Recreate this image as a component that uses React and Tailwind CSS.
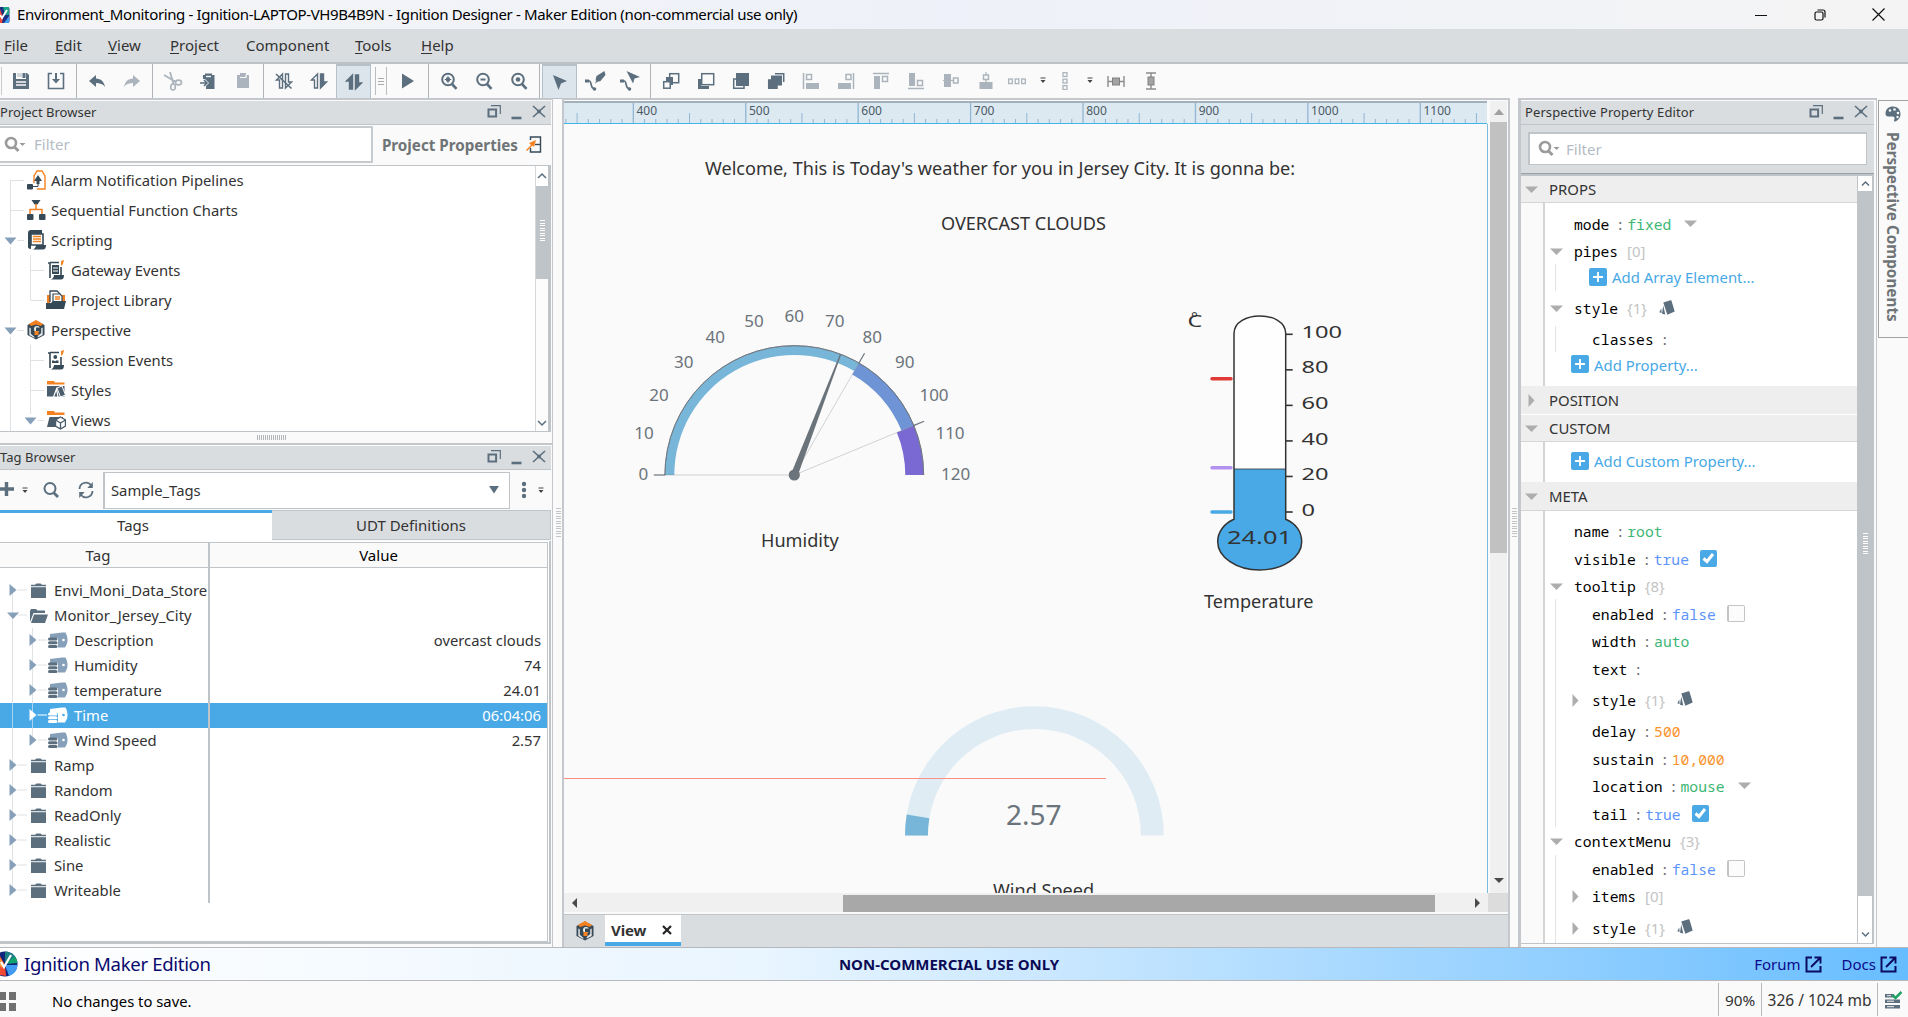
import React from "react";

const INK = "#5c6f7f";
const OFF = "#abb4bc";
const NAVY = "#364957";
const ORANGE = "#f58220";

function Svg({ w = 18, h = 18, vb, className = "", children }) {
  return (
    <svg width={w} height={h} viewBox={vb || `0 0 ${w} ${h}`} className={`block shrink-0 ${className}`} fill="none">
      {children}
    </svg>
  );
}

/* ---------- toolbar icons ---------- */
const Save = () => (
  <Svg>
    <path d="M1 1h3v6h10V1h1l2 2v14H1z" fill={INK} />
    <path d="M5 1h5v4H5z" fill={INK} opacity=".25" />
    <path d="M10.500 1h3v5h-3z" fill={INK} />
    <path d="M4 10h10M4 13h10" stroke="#fafafa" strokeWidth="1.500" />
  </Svg>
);
const Import = () => (
  <Svg>
    <path d="M5 1.500H1.500v15h15v-15H13" stroke={INK} strokeWidth="1.600" />
    <path d="M9 1v9" stroke={INK} strokeWidth="2" />
    <path d="M5 7l4 4.500 4-4.500z" fill={INK} />
  </Svg>
);
const Undo = ({ c = INK, flip }) => (
  <Svg>
    <g transform={flip ? "translate(18 0) scale(-1 1)" : undefined}>
      <path d="M1 9l7-6v3.500c5 .200 8 3 9 8.500-2-3-5-4-9-4v4z" fill={c} />
    </g>
  </Svg>
);
const Cut = () => (
  <Svg w={20} h={20}>
    <path d="M1 4l12 7M7 1l3.500 12" stroke={OFF} strokeWidth="1.800" />
    <ellipse cx="15.500" cy="11.500" rx="3" ry="2.400" stroke={OFF} strokeWidth="1.600" />
    <ellipse cx="10" cy="16" rx="2.300" ry="3" stroke={OFF} strokeWidth="1.600" />
  </Svg>
);
const PasteIn = () => (
  <Svg>
    <path d="M4 3h2V1.500h7V3h2.500v14H7v-3l3-3-4-4H4z" fill={INK} />
    <path d="M7 4.500h5" stroke="#fafafa" strokeWidth="1.400" />
    <path d="M1 11h6M5 8l3 3-3 3" stroke={INK} strokeWidth="1.600" />
  </Svg>
);
const Clip = () => (
  <Svg>
    <path d="M3 3h3V1h6v2h3v13H3z" fill={OFF} />
    <path d="M6 5.500h6V3" stroke="#fafafa" strokeWidth="1.200" />
  </Svg>
);
const Comms = ({ up, down, slash }) => (
  <Svg>
    <path d="M7.500 16H4.500V8H1.500l6-6z" fill={up ? INK : "none"} stroke={INK} strokeWidth="1.400" />
    <path d="M10.500 2h3v8h3l-6 6z" fill={down ? INK : "none"} stroke={INK} strokeWidth="1.400" />
    {slash && <path d="M1 2l15.500 14.500" stroke={INK} strokeWidth="1.600" />}
  </Svg>
);
const Play = () => (
  <Svg>
    <path d="M3 1.500v15L15 9z" fill={INK} />
  </Svg>
);
const Zoom = ({ k }) => (
  <Svg>
    <circle cx="8" cy="7.500" r="5.800" stroke={INK} strokeWidth="2" />
    <path d="M12 12l4.500 4.800" stroke={INK} strokeWidth="2.600" />
    {k === "out" ? <path d="M5.500 7.500h5" stroke={INK} strokeWidth="2" /> : <circle cx="8" cy="7.500" r="2.300" fill={INK} />}
    {k === "in" && <path d="M8 4.300v6.400M4.800 7.500h6.400" stroke={INK} strokeWidth="1.200" />}
  </Svg>
);
const Pointer = () => (
  <Svg>
    <path d="M2 2l14 6-6 2.500L7.500 17z" fill={INK} />
  </Svg>
);
const Pencil = () => (
  <Svg w={22} h={22}>
    <path d="M2 11h3.500c2 0 1 7.500 4.500 7.500" stroke={INK} strokeWidth="1.700" />
    <rect x="1" y="9.500" width="4" height="3" fill={INK} />
    <path d="M20.500 1l1 4-5.500 6.500-4.500-1 1-4.500z" fill={INK} />
    <path d="M13 9.500l-2 4 4-2.500z" fill={INK} />
    <circle cx="10.500" cy="19" r="1.800" fill={INK} />
  </Svg>
);
const PathArrow = () => (
  <Svg w={22} h={22}>
    <path d="M2 11h3.500c2 0 1 7.500 4.500 7.500" stroke={INK} strokeWidth="1.700" />
    <rect x="1" y="9.500" width="4" height="3" fill={INK} />
    <path d="M7.500 1l13.500 6-5.500 1.500L14 13.500z" fill={INK} />
    <circle cx="10.500" cy="19" r="1.800" fill={INK} />
  </Svg>
);
const Stack = ({ k }) => (
  <Svg>
    {k === 0 && (
      <>
        <rect x="7.700" y="1.700" width="9" height="9" stroke={INK} strokeWidth="1.500" />
        <path d="M4 5h7v8H4z" fill={INK} />
        <rect x="1.700" y="9.700" width="6.500" height="6.500" fill="#fafafa" stroke={INK} strokeWidth="1.500" />
      </>
    )}
    {k === 1 && (
      <>
        <path d="M1 7h3v7h8v3H1z" fill={INK} />
        <rect x="4.700" y="1.700" width="12" height="11" fill="#fafafa" stroke={INK} strokeWidth="1.500" />
      </>
    )}
    {k === 2 && (
      <>
        <path d="M4 7H1.700v9.300H12V14" stroke={INK} strokeWidth="1.500" />
        <rect x="4" y="1" width="13" height="13" fill={INK} />
      </>
    )}
    {k === 3 && (
      <>
        <path d="M8 1.700h8.700V10" stroke={INK} strokeWidth="1.500" />
        <rect x="4" y="3.500" width="11" height="10" fill={INK} />
        <path d="M4 8H1.700v8.300H10V13" stroke={INK} strokeWidth="1.500" fill={INK} />
      </>
    )}
  </Svg>
);
const Align = ({ k }) => (
  <Svg>
    {k === "l" && (<><path d="M1.500 1v16" stroke={OFF} strokeWidth="1.500" /><rect x="4.500" y="2.500" width="5" height="5" stroke={OFF} strokeWidth="1.500" /><path d="M4 11h13v6H4z" fill={OFF} /></>)}
    {k === "r" && (<><path d="M16.500 1v16" stroke={OFF} strokeWidth="1.500" /><rect x="9" y="2.500" width="5" height="5" stroke={OFF} strokeWidth="1.500" /><path d="M1 11h13v6H1z" fill={OFF} /></>)}
    {k === "t" && (<><path d="M1 1.500h16" stroke={OFF} strokeWidth="1.500" /><rect x="10.500" y="4.500" width="5" height="5" stroke={OFF} strokeWidth="1.500" /><path d="M2 4h6v13H2z" fill={OFF} /></>)}
    {k === "b" && (<><path d="M1 16.500h16" stroke={OFF} strokeWidth="1.500" /><rect x="10.500" y="8.500" width="5" height="5" stroke={OFF} strokeWidth="1.500" /><path d="M2 1h6v13H2z" fill={OFF} /></>)}
    {k === "m" && (<><path d="M1 8.500h16" stroke={OFF} strokeWidth="1.200" /><path d="M2 2h7v13H2z" fill={OFF} /><rect x="11.500" y="6" width="4.500" height="5" fill="#fafafa" stroke={OFF} strokeWidth="1.500" /></>)}
    {k === "c" && (<><path d="M9 0v17" stroke={OFF} strokeWidth="1.200" /><path d="M2.500 10h13v7h-13z" fill={OFF} /><rect x="6.500" y="3" width="5" height="4.500" fill="#fafafa" stroke={OFF} strokeWidth="1.500" /></>)}
    {k === "h" && [0, 6.500, 13].map((x) => <rect key={x} x={x + 0.7} y="7" width="3.600" height="4.600" stroke={OFF} strokeWidth="1.300" />)}
    {k === "v" && [0, 6.500, 13].map((y) => <rect key={y} y={y + 0.7} x="7" width="4" height="3.800" stroke={OFF} strokeWidth="1.300" />)}
    {k === "w" && (<><path d="M1 4v11M17 4v11M1 9.500h16" stroke="#8c8c8c" strokeWidth="1.400" /><rect x="5.500" y="6" width="7" height="7" fill="#a3a3a3" stroke="#808080" /></>)}
    {k === "e" && (<><path d="M4 1h10M4 17h10M9 1v16" stroke="#8c8c8c" strokeWidth="1.400" /><rect x="6" y="5" width="6" height="8" fill="#a3a3a3" stroke="#808080" /></>)}
  </Svg>
);
const MiniCaret = ({ c = "#444" }) => (
  <Svg w={8} h={7}>
    <path d="M1.500 1h5" stroke={c} strokeWidth="1" />
    <path d="M1.500 3h5L4 6z" fill={c} />
  </Svg>
);

const Cell = ({ w = "w-[35px]", on, children }) => (
  <div className={`flex shrink-0 items-center justify-center ${w} ${on ? "h-[35px] border border-t-2 border-[#b6c0c9] bg-[#dce4ec]" : "h-[34px] pb-px"}`}>{children}</div>
);
const Sep = () => <div className="mx-[2.500px] h-[34px] w-px shrink-0 bg-[#b0b4b8]" />;

function Toolbar() {
  return (
    <div className="flex h-[36px] shrink-0 items-start border-t-2 border-[#bcc2c6] bg-[#fafafa]">
      <div className="mt-[3px] mr-px ml-px h-7 w-px bg-[#c8ccd0]" />
      <Cell><Save /></Cell><Cell><Import /></Cell><Sep />
      <Cell><Undo /></Cell><Cell><Undo c={OFF} flip /></Cell><Sep />
      <Cell><Cut /></Cell><Cell><PasteIn /></Cell><Cell><Clip /></Cell><Sep />
      <Cell><Comms slash /></Cell><Cell><Comms down /></Cell><Cell on><Comms up down /></Cell>
      <div className="mt-[3px] flex w-[19px] shrink-0 justify-center">
        <div className="flex h-7 w-[12px] flex-col items-center justify-center gap-[2px] border-x border-[#b9bdc1]">
          <i className="h-px w-[6px] bg-[#aaa]" /><i className="h-px w-[6px] bg-[#aaa]" /><i className="h-px w-[6px] bg-[#aaa]" />
        </div>
      </div>
      <Cell><Play /></Cell><Sep />
      <Cell><Zoom k="in" /></Cell><Cell><Zoom k="out" /></Cell><Cell><Zoom k="fit" /></Cell><Sep />
      <Cell on><Pointer /></Cell><Cell><Pencil /></Cell><Cell><PathArrow /></Cell><Sep />
      {[0, 1, 2, 3].map((k) => <Cell key={k}><Stack k={k} /></Cell>)}
      {["l", "r", "t", "b", "m", "c"].map((k) => <Cell key={k}><Align k={k} /></Cell>)}
      <Cell w="w-[27px]"><Align k="h" /></Cell>
      <Cell w="w-[25px]"><MiniCaret /></Cell>
      <Cell w="w-[19px]"><Align k="v" /></Cell>
      <Cell w="w-[31px]"><MiniCaret /></Cell>
      <Cell w="w-[21px]"><Align k="w" /></Cell>
      <Cell w="w-[49px]"><Align k="e" /></Cell>
    </div>
  );
}

/* ---------- shared pieces ---------- */
const PanelHead = ({ title, pad = "pl-0", pr = "pr-[5px]", font = "tracking-[0.1px]" }) => (
  <div className={`flex h-6 shrink-0 items-center justify-between border-b border-[#c0c5c9] bg-[#d9dde0] ${pad} ${pr}`}>
    <span className={`text-[13px] leading-none text-[#333] ${font}`}>{title}</span>
    <Svg w={60} h={18} className="mb-px">
      <path d="M5 2.700h9.300V11" stroke={INK} strokeWidth="1.200" />
      <rect x="2.500" y="6.500" width="7.600" height="7" stroke={INK} strokeWidth="2" />
      <path d="M25.500 15h10" stroke={INK} strokeWidth="2.600" />
      <path d="M47 3l12 11M59 3L47 14" stroke={INK} strokeWidth="1.600" />
      <circle cx="53" cy="8.500" r="2" fill={INK} />
    </Svg>
  </div>
);
const FilterGlyph = () => (
  <Svg w={22} h={18}>
    <circle cx="7" cy="7" r="5" stroke="#9b9b9b" strokeWidth="2.600" />
    <path d="M10.500 11l4 4" stroke="#9b9b9b" strokeWidth="3" />
    <path d="M15.500 7h6L18.500 10z" fill="#9b9b9b" />
  </Svg>
);
const HGrip = () => (
  <div className="flex gap-px">
    {Array.from({ length: 15 }, (_, i) => <i key={i} className="h-[5px] w-px bg-[#b4b7ba]" />)}
  </div>
);
const VGrip = ({ c = "bg-[#c2c4c6]", n = 12, w = "w-[5px]" }) => (
  <div className="flex flex-col gap-[1.500px]">
    {Array.from({ length: n }, (_, i) => <i key={i} className={`h-px ${w} ${c}`} />)}
  </div>
);

/* ---------- project tree ---------- */
const treeIcons = {
  alarm: (
    <Svg w={20} h={20}>
      <path d="M8 13V6l3-5h5l3 5v13h-8" stroke={ORANGE} strokeWidth="1.400" />
      <path d="M12 5l4 6h-2.500v3h-3v-3H8z" fill={NAVY} />
      <path d="M12 14v2.500H6" stroke={NAVY} strokeWidth="1" />
      <rect x="1" y="14" width="6" height="5.500" rx="1" fill={NAVY} />
    </Svg>
  ),
  sfc: (
    <Svg w={20} h={20}>
      <path d="M5.500 0h9l-3 4.500h-3z" fill={NAVY} />
      <path d="M10 4v5M4 14v-4.500h12V14" stroke={ORANGE} strokeWidth="1.500" />
      <rect x="1" y="14" width="6.500" height="6" rx="1" fill={NAVY} /><rect x="13" y="14" width="6.500" height="6" rx="1" fill={NAVY} />
    </Svg>
  ),
  script: (
    <Svg w={20} h={20}>
      <path d="M2 3c0-2 1-3 3-3h11v15H5v4c-2 0-3-1-3-2z" fill={NAVY} />
      <path d="M5 4h12v11H5z" fill="#fff" stroke={NAVY} strokeWidth="1.600" />
      <path d="M7 6.500h8M7 9h8M7 11.500h8" stroke={ORANGE} strokeWidth="1.400" />
      <path d="M10 15h10c0 3-1 4.500-3 4.500H6c2 0 4-2 4-4.500z" fill={NAVY} />
    </Svg>
  ),
  gateway: (
    <Svg w={20} h={20}>
      <path d="M4 18V3h-2M4 2.500h9M15 7v8" stroke={NAVY} strokeWidth="1.600" />
      <path d="M6 5h7v9H6z" fill={NAVY} /><path d="M7 8h5M7 11h5" stroke="#fff" strokeWidth="1" />
      <path d="M8 15h10c0 3-1 4.500-3 4.500H4c2 0 4-2 4-4.500z" fill={NAVY} />
      <path d="M15 1l3-1-1 4-2 2z" fill={ORANGE} />
    </Svg>
  ),
  library: (
    <Svg w={20} h={20}>
      <path d="M1 5h3v9H1zM16 5h3v6h-3z" fill={ORANGE} />
      <path d="M4 12V1h7l3 3v7" fill="#fff" stroke={NAVY} strokeWidth="1.300" />
      <path d="M7 12V4h7l2 2v6" fill="#fff" stroke={NAVY} strokeWidth="1.200" />
      <path d="M9 7h5M9 9h5" stroke={ORANGE} strokeWidth="1.300" />
      <path d="M0 19V13l5 0 2-2h13l-2 8z" fill={NAVY} />
    </Svg>
  ),
  perspective: (
    <Svg w={20} h={20}>
      <path d="M10 .500l8.500 4.500v10L10 19.500 1.500 15V5z" fill={NAVY} />
      <path d="M10 0l7 4-2 2-5-1.500L5 6 3 4z" fill={ORANGE} />
      <path d="M3.300 7.500l1.500.8v5.400l3.500 3v1.200L3.300 15zM16.700 7.500l-1.500.8V13l-3.500 3v1.500l5-2.500z" fill="#fff" opacity=".85" />
      <circle cx="11" cy="9" r="3" fill="#fff" opacity=".9" /><path d="M10 7.500h4v3.500h-4z" fill={NAVY} /><path d="M8.500 11h4v4h-4z" fill={ORANGE} />
    </Svg>
  ),
  session: (
    <Svg w={20} h={20}>
      <path d="M4 18V3h-2M4 2.500h9M15 7v8" stroke={NAVY} strokeWidth="1.600" />
      <circle cx="9.300" cy="7" r="1.900" fill={NAVY} /><path d="M6 13v-2.500h2l1 1 1-1h2.500V13z" fill={NAVY} />
      <path d="M8 15h10c0 3-1 4.500-3 4.500H4c2 0 4-2 4-4.500z" fill={NAVY} />
      <path d="M15 1l3-1-1 4-2 2z" fill={ORANGE} />
    </Svg>
  ),
  styles: (
    <Svg w={20} h={20}>
      <path d="M1 4.500V1h7l1 1.500h9.500v2z" fill={ORANGE} />
      <path d="M1 6h17.500v10.500H1z" fill="#4a5d6c" />
      <path d="M11 8l5-2 3.500 9-5 2z" fill="#4a5d6c" stroke="#fff" strokeWidth="1" /><path d="M7.500 17l3-8 1.500 8" stroke="#fff" strokeWidth="1.200" />
    </Svg>
  ),
  views: (
    <Svg w={20} h={20}>
      <path d="M1 5V1h7l1 1.500h9.500V5z" fill={ORANGE} />
      <path d="M1 17l2.500-10H17v10z" fill="#4a5d6c" />
      <path d="M14.500 7l5 3v6l-5 3-5-3v-6z" fill="#fff" stroke="#4a5d6c" strokeWidth="1.400" />
      <path d="M9.500 10l5 3 5-3M14.500 13v6" stroke="#4a5d6c" strokeWidth="1.300" />
    </Svg>
  ),
};
const projectRows = [
  { t: "Alarm Notification Pipelines", i: "alarm", l: 1, first: true },
  { t: "Sequential Function Charts", i: "sfc", l: 1 },
  { t: "Scripting", i: "script", l: 1, open: true },
  { t: "Gateway Events", i: "gateway", l: 2 },
  { t: "Project Library", i: "library", l: 2, last: true },
  { t: "Perspective", i: "perspective", l: 1, open: true },
  { t: "Session Events", i: "session", l: 2 },
  { t: "Styles", i: "styles", l: 2 },
  { t: "Views", i: "views", l: 2, open: true, last: true },
];
function ProjectRow({ r }) {
  const w = r.l === 1 ? 26 : 46;
  const x = r.l === 1 ? 10.5 : 30.5;
  return (
    <div className="flex h-[30px] items-center">
      <Svg w={w} h={30}>
        <path d={`M10.500 ${r.first ? 15 : 0}V30M${x + (r.open ? 7 : 0)} 15.500H${w - 2}`} stroke="#dfe2e5" />
        {r.l === 2 && <path d={`M30.500 0V${r.last ? 15 : 30}`} stroke="#dfe2e5" />}
        {r.open && <><path d={`M${x - 2} 9h4v13h-4z`} fill="#fff" /><path d={`M${x - 6} 12.500h12l-6 7z`} fill="#86a0b9" /></>}
      </Svg>
      {treeIcons[r.i]}
      <span className="ml-[5px] text-[14.800px] whitespace-nowrap text-[#333]">{r.t}</span>
    </div>
  );
}

/* ---------- tag tree ---------- */
const tagRows = [
  { t: "Envi_Moni_Data_Store", l: 0 },
  { t: "Monitor_Jersey_City", l: 0, open: true },
  { t: "Description", l: 1, v: "overcast clouds" },
  { t: "Humidity", l: 1, v: "74" },
  { t: "temperature", l: 1, v: "24.01" },
  { t: "Time", l: 1, v: "06:04:06", sel: true },
  { t: "Wind Speed", l: 1, v: "2.57", last: true },
  { t: "Ramp", l: 0 },
  { t: "Random", l: 0 },
  { t: "ReadOnly", l: 0 },
  { t: "Realistic", l: 0 },
  { t: "Sine", l: 0 },
  { t: "Writeable", l: 0, end: true },
];
function TagRow({ r, first }) {
  const x = r.l ? 29.5 : 9.5;
  const ac = r.sel ? "#fff" : "#86a0b9";
  const gc = r.sel ? "#a5d3f3" : "#dfe2e5";
  return (
    <div className={`flex h-[25px] items-center overflow-hidden ${r.sel ? "bg-[#48a9e6]" : ""}`}>
      <Svg w={r.l ? 48 : 30} h={25}>
        <path d={`M12.500 ${first ? 12 : 0}V${r.end ? 12 : 25}`} stroke={gc} />
        {r.l > 0 && <path d={`M32.500 0V${r.last ? 12 : 25}`} stroke={gc} />}
        <path d={`M${x + 8} 12H${r.l ? 47 : 27}`} stroke={r.sel ? "#fff" : gc} />
        {r.open ? <path d="M7 9.500h12l-6 6.500z" fill={ac} /> : <path d={`M${x} 6v12l7-6z`} fill={ac} />}
      </Svg>
      {r.l ? (
        <Svg w={20} h={18}>
          <path d="M2 2l12-1.500h3.500c1.500 3 2 5 2 7.500s-.5 4-2.500 7.500H10V6H2z" fill={r.sel ? "#fff" : "#86a0b9"} />
          <circle cx="15.500" cy="8" r="1.300" fill={r.sel ? "#48a9e6" : "#fff"} />
          {[6.500, 10.200, 13.900].map((y) => <rect key={y} x="0" y={y - 1} width="9.500" height="3" rx="1.500" fill={r.sel ? "#fff" : INK} />)}
        </Svg>
      ) : r.open ? (
        <Svg w={18} h={16}>
          <path d="M0 14V3l1-2h5l1.500 1.500H15V5H3.500z" fill={INK} /><path d="M4 6.500h14L15 15H1z" fill={INK} />
        </Svg>
      ) : (
        <Svg w={17} h={16}>
          <path d="M1 1.800h4L6.500.500h4L12 1.800h4v1.500H1z" fill={INK} /><path d="M1 4.200h15V15H1z" fill={INK} />
        </Svg>
      )}
      <span className={`text-[14.800px] whitespace-nowrap ${r.l ? "ml-[6px]" : r.open ? "ml-[6px]" : "ml-[7px]"} ${r.sel ? "text-white" : "text-[#333]"}`}>{r.t}</span>
    </div>
  );
}

function LeftDock() {
  return (
    <div className="flex w-[553px] shrink-0 flex-col border-r border-[#c4c8cc]">
      <div className="flex h-[334px] shrink-0 flex-col border-t-2 border-[#c4c8cc] pt-px pr-px">
        <PanelHead title="Project Browser" font="tracking-[0.020px]" />
        <div className="flex h-[40px] shrink-0 items-start justify-between pt-px">
          <div className="flex h-[37px] w-[373px] items-center border-2 border-l-0 border-[#c6cbd0] bg-white pl-[4px]">
            <FilterGlyph /><span className="ml-[8px] text-[15px] text-[#b3bcc4]">Filter</span>
          </div>
          <div className="flex h-[38px] items-center pr-[9px]">
            <span className="text-[15.200px] font-bold text-[#6f7477]">Project Properties</span>
            <Svg w={17} h={18} className="ml-[7px]">
              <path d="M5.500 4V1h10v15h-10v-4" stroke={NAVY} strokeWidth="1.400" /><path d="M10 8.500h5" stroke={NAVY} strokeWidth="1.400" />
              <path d="M1 14l5-5-2-2 7-3-2 7-1.500-1.500L2 15z" fill={ORANGE} />
            </Svg>
          </div>
        </div>
        <div className="flex min-h-0 flex-1 border-y border-r-[3px] border-[#bfc4c8] bg-white">
          <div className="min-w-0 flex-1 overflow-hidden"><div className="-mt-px">{projectRows.map((r) => <ProjectRow key={r.t} r={r} />)}</div></div>
          <div className="flex w-[13px] flex-col border-l border-[#d3d7da]">
            <div className="flex h-[20px] items-center justify-center bg-white"><Svg w={10} h={8}><path d="M1 6l4-4 4 4" stroke={INK} strokeWidth="1.500" /></Svg></div>
            <div className="flex h-[93px] items-end justify-center bg-[#bfc4c8] pb-[38px]"><VGrip c="bg-white" n={9} /></div>
            <div className="flex flex-1 items-end justify-center bg-[#fcfcfc] pb-[4px]"><Svg w={10} h={8}><path d="M1 2l4 4 4-4" stroke={INK} strokeWidth="1.500" /></Svg></div>
          </div>
        </div>
      </div>
      <div className="flex h-[11px] shrink-0 items-center justify-center pr-[9px]"><HGrip /></div>
      <div className="flex min-h-0 flex-1 flex-col border-t-2 border-[#c4c8cc] pt-px pr-px">
        <PanelHead title="Tag Browser" font="tracking-[0.020px]" />
        <div className="flex h-[40px] shrink-0 items-center">
          <Svg w={15} h={16} className="mt-[-2px]"><path d="M0 8h14M6.500 1v14" stroke={INK} strokeWidth="3.400" /></Svg>
          <div className="ml-[6px]"><MiniCaret /></div>
          <Svg className="ml-[13px]"><circle cx="8" cy="7.500" r="5.500" stroke={INK} strokeWidth="2" /><path d="M12 12l4 4" stroke={INK} strokeWidth="2.800" /></Svg>
          <Svg className="ml-[17px]"><path d="M2.500 8a6.500 6.500 0 0 1 11.500-4M15.500 10A6.500 6.500 0 0 1 4 14" stroke={INK} strokeWidth="1.800" /><path d="M15.800 1v6h-5.500zM2.200 17v-6h5.500z" fill={INK} /></Svg>
          <div className="ml-[8px] flex h-[37px] w-[407px] items-center justify-between border border-l-2 border-[#bfc4c8] bg-white pr-[9px] pl-[6px]">
            <span className="text-[14.800px] text-[#333]">Sample_Tags</span>
            <Svg w={12} h={10}><path d="M1 1h10L6 8.500z" fill={INK} /></Svg>
          </div>
          <Svg w={6} h={18} className="ml-[11px]"><circle cx="3" cy="3" r="2.200" fill={INK} /><circle cx="3" cy="9" r="2.200" fill={INK} /><circle cx="3" cy="15" r="2.200" fill={INK} /></Svg>
          <div className="ml-[10px]"><MiniCaret /></div>
        </div>
        <div className="flex h-[31px] shrink-0">
          <div className="flex w-[272px] items-center justify-center border-t-[3px] border-[#48a9e6] bg-white pr-[6px] pb-[4px] text-[15px] text-[#333]">Tags</div>
          <div className="mb-px flex flex-1 items-center justify-center border-y border-r border-[#c0c5c9] bg-[#d9dde0] text-[15px] text-[#333]">UDT Definitions</div>
        </div>
        <div className="mb-[3px] flex min-h-0 flex-1 flex-col border-r-2 border-b-2 border-[#bfc4c8] bg-white pt-px pr-px">
          <div className="flex min-h-0 flex-1 flex-col border-r border-b border-[#c0c5c9]">
            <div className="flex h-[26px] shrink-0 border-y border-[#c0c5c9] bg-[#fafafa] text-[15px] text-[#333]">
              <div className="flex w-[208px] items-center justify-center pr-[12px]">Tag</div>
              <div className="w-[2px] bg-[#bfc4c8]" />
              <div className="flex flex-1 items-center justify-center text-black">Value</div>
            </div>
            <div className="flex">
              <div className="w-[208px] overflow-hidden pt-[10px]">{tagRows.map((r, i) => <TagRow key={r.t} r={r} first={i === 0} />)}</div>
              <div className="w-[2px] bg-[#bfc4c8]" />
              <div className="flex-1 pt-[10px]">
                {tagRows.map((r) => (
                  <div key={r.t} className={`flex h-[25px] items-center justify-end pr-[6px] text-[14.800px] ${r.sel ? "bg-[#48a9e6] text-white" : "text-[#333]"}`}>{r.v}</div>
                ))}
              </div>
            </div>
          </div>
        </div>
      </div>
    </div>
  );
}

/* ---------- design canvas ---------- */
const PX = 11.243;
function Ruler() {
  const marks = [];
  for (let i = -6; i <= 75; i++) {
    const x = 69.3 + i * PX;
    const y = i % 10 === 0 ? 2 : i % 5 === 0 ? 12 : 18;
    marks.push(<path key={i} d={`M${x} ${y}V23`} stroke="#93b6d3" strokeWidth={i % 10 === 0 ? 1.3 : 1} />);
  }
  return (
    <div className="relative h-[23px] w-[923px] shrink-0 overflow-hidden border-t-2 border-b border-t-[#a3b1bd] border-b-[#45b5e8] bg-[#dce9f1]">
      <Svg w={923} h={23} className="-mt-[2px]">{marks}</Svg>
      {[400, 500, 600, 700, 800, 900, 1000, 1100].map((n, i) => (
        <span key={n} className="absolute top-0 text-[12px] leading-[15px] text-[#4b5a66]" style={{ left: 72.5 + i * PX * 10 }}>{n}</span>
      ))}
    </div>
  );
}

const polar = (cx, cy, r, deg) => [cx - r * Math.cos((deg * Math.PI) / 180), cy - r * Math.sin((deg * Math.PI) / 180)];
function band(cx, cy, r1, r0, a, b) {
  const [x1, y1] = polar(cx, cy, r1, a), [x2, y2] = polar(cx, cy, r1, b);
  const [x3, y3] = polar(cx, cy, r0, b), [x4, y4] = polar(cx, cy, r0, a);
  return `M${x1} ${y1}A${r1} ${r1} 0 0 1 ${x2} ${y2}L${x3} ${y3}A${r0} ${r0} 0 0 0 ${x4} ${y4}Z`;
}
const gaugeLabels = [
  [0, 43.3, 193.7], [10, 44, 153], [20, 59, 114.7], [30, 83.7, 82], [40, 115.3, 57], [50, 154, 41], [60, 194.3, 36],
  [70, 234.7, 41], [80, 272.3, 57], [90, 304.7, 82], [100, 334, 114.7], [110, 350, 153], [120, 355.7, 193.7],
];
function HumidityGauge() {
  const cx = 194.3, cy = 195;
  const line = (a, r0, r1) => {
    const [x1, y1] = polar(cx, cy, r0, a), [x2, y2] = polar(cx, cy, r1, a);
    return `M${x1} ${y1}L${x2} ${y2}`;
  };
  const [nx, ny] = polar(cx, cy, 129, 111);
  return (
    <Svg w={420} h={220}>
      <path d={band(cx, cy, 129.2, 120, 0, 120)} fill="#77b5d9" />
      <path d={band(cx, cy, 129.2, 116, 120, 157.5)} fill="#6e94d6" />
      <path d={band(cx, cy, 129.2, 111, 157.5, 180)} fill="#7a69d2" />
      <path d={band(cx, cy, 129.4, 129.4, 0, 180)} stroke="#6b737b" strokeWidth=".8" />
      {[0, 120, 157.5].map((a) => (
        <g key={a}>
          <path d={line(a, 0, 129)} stroke="#6b737b" strokeOpacity=".3" />
          <path d={line(a, 129, 140.5)} stroke="#6b737b" strokeWidth="1.200" />
        </g>
      ))}
      <path d={`M${cx - 3.2} ${cy - 1.2}L${nx - 0.6} ${ny - 0.2}L${nx + 0.6} ${ny + 0.2}L${cx + 3.2} ${cy + 1.2}Z`} fill="#6b737b" />
      <circle cx={cx} cy={cy} r="5.600" fill="#6b737b" />
      {gaugeLabels.map(([n, x, y]) => (
        <text key={n} x={x} y={y + 6} textAnchor="middle" fontSize="17" fill="#6b737b">{n}</text>
      ))}
    </Svg>
  );
}
function Thermometer() {
  return (
    <Svg w={220} h={310}>
      <path d="M84 239.300V53.500C84 30 135.700 30 135.700 53.500V239.300C146 243.500 151.700 252 151.700 261.700 151.700 277 133 290 109.700 290S67.700 277 67.700 261.700C67.700 252 74 243.500 84 239.300Z" fill="#fff" fillOpacity=".7" />
      <path d="M84 189H135.700V239C146 243 151.700 252 151.700 261.700 151.700 277 133 290 109.700 290S67.700 277 67.700 261.700C67.700 252 74 243 84 239Z" fill="#48a9e6" />
      <path d="M84 189H135.700" stroke="#333" strokeWidth=".8" />
      <path d="M84 239.300V53.500C84 30 135.700 30 135.700 53.500V239.300C146 243.500 151.700 252 151.700 261.700 151.700 277 133 290 109.700 290S67.700 277 67.700 261.700C67.700 252 74 243.500 84 239.300Z" stroke="#333" strokeWidth="1.500" />
      {[100, 80, 60, 40, 20, 0].map((n, i) => (
        <g key={n}>
          <path d={`M136 ${54.3 + i * 35.54}h6.700`} stroke="#333" strokeWidth="1.600" />
          <text transform={`translate(151.500 ${57.8 + i * 35.6}) scale(1.48 1)`} fontSize="16" fill="#333">{n}</text>
        </g>
      ))}
      <text transform="translate(109.500 264) scale(1.45 1)" textAnchor="middle" fontSize="17.500" fill="#333">24.01</text>
      <text transform="translate(37.500 46.700) scale(1.38 1)" fontSize="17" fill="#333">C</text>
      <text transform="translate(41 42.500) scale(1.15 1)" fontSize="14" fill="#333">°</text>
      {[[98.700, "#e03a38"], [187.700, "#b490f0"], [232, "#48a9e6"]].map(([y, c]) => (
        <path key={c} d={`M62 ${y}h19`} stroke={c} strokeWidth="3.400" strokeLinecap="round" />
      ))}
    </Svg>
  );
}
const CanvasText = ({ pos, children, cls = "text-[18.100px] text-[#333]" }) => (
  <div className={`absolute leading-[26px] whitespace-nowrap ${pos} ${cls}`}>{children}</div>
);

function Canvas() {
  return (
    <div className="relative min-h-0 flex-1 overflow-hidden border-r border-[#7cbbe0] bg-[#fafafa]">
      <CanvasText pos="left-[141px] top-[31px]">Welcome, This is Today's weather for you in Jersey City. It is gonna be:</CanvasText>
      <CanvasText pos="left-[377px] top-[86px]">OVERCAST CLOUDS</CanvasText>
      <div className="absolute top-[156px] left-[36px]"><HumidityGauge /></div>
      <CanvasText pos="left-[197px] top-[403px]">Humidity</CanvasText>
      <div className="absolute top-[156px] left-[586px]"><Thermometer /></div>
      <CanvasText pos="left-[640px] top-[464px]">Temperature</CanvasText>
      <div className="absolute top-[576px] left-[336px]">
        <Svg w={270} h={140}>
          <path d={band(134.4, 135.5, 129.4, 106.5, 0, 180)} fill="#dfecf4" />
          <path d={band(134.4, 135.5, 129.4, 106.5, 0, 9.3)} fill="#77b5d9" />
        </Svg>
      </div>
      <CanvasText pos="left-[442px] top-[677px]" cls="text-[28px] text-[#6b737b]">2.57</CanvasText>
      <CanvasText pos="left-[429px] top-[753px]">Wind Speed</CanvasText>
      <div className="absolute top-[654px] left-0 h-px w-[542px] bg-[#fb8f86]" />
    </div>
  );
}

function Workspace() {
  return (
    <div className="flex w-[948px] shrink-0 flex-col border-x-2 border-t-2 border-[#c4c8cc] pt-px">
      <div className="flex h-[792px] shrink-0">
        <div className="flex w-[924px] flex-col"><Ruler /><Canvas /></div>
        <div className="ml-[2px] flex w-[17px] flex-col items-center bg-[#f0f0f0]">
          <div className="flex h-[21px] items-center"><Svg w={10} h={6}><path d="M0 6h10L5 0z" fill="#a0a0a0" /></Svg></div>
          <div className="h-[431px] w-full bg-[#c1c1c1]" />
          <div className="flex flex-1 items-end pb-[9px]"><Svg w={10} h={6}><path d="M0 0h10L5 5z" fill="#4a4a4a" /></Svg></div>
        </div>
      </div>
      <div className="flex h-[19px] shrink-0 bg-[#f0f0f0]">
        <div className="flex w-[279px] items-center pl-[8px]"><Svg w={6} h={10}><path d="M5 0v10L0 5z" fill="#4a4a4a" /></Svg></div>
        <div className="mt-[2px] w-[592px] bg-[#a8a8a8]" />
        <div className="flex w-[53px] items-center justify-end pr-[8px]"><Svg w={6} h={10}><path d="M1 0v10l5-5z" fill="#4a4a4a" /></Svg></div>
        <div className="flex-1 bg-[#dcdcdc]" />
      </div>
      <div className="mt-[2px] flex flex-1 border-t border-b-2 border-[#c0c5c9] bg-[#d9dde0]">
        <div className="flex w-[41px] items-center justify-center">{treeIcons.perspective}</div>
        <div className="mb-[1px] flex w-[76px] items-center justify-between border-b-4 border-[#48a9e6] bg-white pt-[4px] pr-[9px] pl-[6px]">
          <span className="text-[15px] font-bold tracking-[-0.1px] text-[#333]">View</span>
          <Svg w={10} h={10}><path d="M1 1l8 8M9 1L1 9" stroke="#222" strokeWidth="2.200" /></Svg>
        </div>
      </div>
    </div>
  );
}

/* ---------- property editor ---------- */
const Tri = ({ open = true }) => (
  <Svg w={13} h={13}>{open ? <path d="M0 3.500h13L6.500 10z" fill="#adadad" /> : <path d="M3.500 0v13L9.500 6.500z" fill="#adadad" />}</Svg>
);
const Section = ({ t, open = true, h, line = "border-[#d6d6d6]" }) => (
  <div className={`flex shrink-0 items-center border-b bg-[#eee] pl-[4px] ${h} ${line}`}>
    <Tri open={open} /><span className="ml-[11px] text-[14.900px] text-[#333]">{t}</span>
  </div>
);
const Swatch = () => (
  <Svg w={17} h={16}>
    <path d="M4.300 2.500L11.500.300c.5-.2.900 0 1 .500L15.700 11.500 8.300 14.800z" fill={INK} /><path d="M4.200 5.500L6.300 14.500l-3.300-.8zM2.300 8.500l.3 4.500-2.300-.8z" fill={INK} />
  </Svg>
);
const Check = ({ on }) =>
  on ? (
    <div className="flex h-[17px] w-[17px] items-center justify-center rounded-[2px] bg-[#4ba9e5]"><Svg w={13} h={12}><path d="M1.500 6.500l3.500 3L11 2" stroke="#fff" strokeWidth="3" /></Svg></div>
  ) : (
    <div className="h-[17px] w-[18px] rounded-[2px] border border-l-2 border-[#c4c4c4] bg-[#fcfcfc]" />
  );
const valueColors = { g: "text-[#3db674]", b: "text-[#5c94fb]", o: "text-[#f8922a]" };
function Prop({ h, deep, tri, name, count, v, c, extra, guide }) {
  return (
    <div className={`flex shrink-0 items-center ${h}`}>
      <div className={`h-full shrink-0 ${guide ? "ml-[10px] w-[10px] border-l border-[#e4e4e4]" : "w-[20px]"} ${deep ? "" : "hidden"}`} />
      <div className={`flex shrink-0 items-center ${deep ? "w-[27px] pl-[4px]" : "w-[29px] pl-[5px]"}`}>{tri && <Tri open={tri === "open"} />}</div>
      <span className="font-['Noto_Sans_Mono','DejaVu_Sans_Mono',monospace] text-[14.700px] leading-none whitespace-pre text-black">{name}</span>
      {count ? (
        <span className="ml-[9px] text-[15px] leading-none text-[#c4c4c4]">{count}</span>
      ) : (
        <span className="w-[18px] shrink-0 pl-[9px] text-[15px] leading-none text-[#666]">:</span>
      )}
      {v && <span className={`font-['Noto_Sans_Mono','DejaVu_Sans_Mono',monospace] text-[14.700px] leading-none ${valueColors[c]}`}>{v}</span>}
      {extra && <span className={`mb-[2px] shrink-0 ${extra.gap}`}>{extra.el}</span>}
    </div>
  );
}
const Add = ({ t, pl, h, guide }) => (
  <div className={`flex shrink-0 items-center ${h}`}>
    <div className={`h-full shrink-0 ${guide ? "ml-[10px] border-l border-[#e4e4e4]" : ""} ${pl}`} />
    <div className="mb-[2px] flex h-[18px] w-[18px] items-center justify-center rounded-[2px] bg-[#48a9e6]"><Svg w={10} h={10}><path d="M0 5h10M5 0v10" stroke="#fff" strokeWidth="1.800" /></Svg></div>
    <span className="ml-[5px] text-[14.900px] whitespace-nowrap text-[#48a9e6]">{t}</span>
  </div>
);
const Body = ({ h, children }) => (
  <div className={`flex shrink-0 ${h}`}>
    <div className="w-[24px] shrink-0 border-r-2 border-[#d4d4d4] bg-[#fafafa]" />
    <div className="flex min-w-0 flex-1 flex-col bg-white">{children}</div>
  </div>
);
const swatch = { gap: "ml-[12px]", el: <Swatch /> };
const drop = { gap: "ml-[13px]", el: <Tri /> };
const ticked = { gap: "ml-[11px]", el: <Check on /> };
const blank = { gap: "ml-[11px]", el: <Check /> };

function PropertyEditor() {
  return (
    <div className="flex w-[359px] shrink-0 flex-col border-t-2 border-r border-l-2 border-[#c4c8cc]">
      <div className="mr-[2px] flex min-h-0 flex-1 flex-col border-l border-[#c4c8cc] pt-px">
        <PanelHead title="Perspective Property Editor" pad="pl-[4px]" pr="pr-[6px]" font="tracking-[0.1px]" />
        <div className="flex h-[49px] shrink-0 border-b border-[#9aa1a7] bg-[#d9dde0] px-[7px] pt-[7px]">
          <div className="flex h-[33px] w-full items-center border border-t-2 border-l-2 border-[#c0c5c9] bg-white pl-[8px]">
            <FilterGlyph /><span className="ml-[6px] text-[15px] text-[#b3bcc4]">Filter</span>
          </div>
        </div>
        <div className="mb-[3px] flex min-h-0 flex-1 border-t-2 border-r-2 border-b border-[#bfc4c8]">
          <div className="flex min-h-0 w-[336px] flex-col overflow-hidden">
            <Section t="PROPS" h="h-[27px]" />
            <Body h="h-[183px]">
              <div className="h-[7px]" />
              <Prop h="h-[28px]" name="mode" v="fixed" c="g" extra={drop} />
              <Prop h="h-[26px]" tri="open" name="pipes" count="[0]" />
              <Add h="h-[27px]" pl="w-[34px]" guide t="Add Array Element..." />
              <Prop h="h-[35px]" tri="open" name="style" count="{1}" extra={swatch} />
              <Prop h="h-[26px]" deep guide name="classes" />
              <Add h="h-[26px]" pl="w-[26px]" t="Add Property..." />
            </Body>
            <Section t="POSITION" open={false} h="h-[29px]" line="border-white" />
            <Section t="CUSTOM" h="h-[27px]" />
            <Body h="h-[40px]"><Add h="h-[39px]" pl="w-[26px]" t="Add Custom Property..." /></Body>
            <Section t="META" h="h-[29px]" />
            <Body h="h-[440px]">
              <div className="h-[6px]" />
              <Prop h="h-[28px]" name="name" v="root" c="g" />
              <Prop h="h-[28px]" name="visible" v="true" c="b" extra={ticked} />
              <Prop h="h-[26px]" tri="open" name="tooltip" count="{8}" />
              <Prop h="h-[30px]" deep guide name="enabled" v="false" c="b" extra={blank} />
              <Prop h="h-[24px]" deep guide name="width" v="auto" c="g" />
              <Prop h="h-[32px]" deep guide name="text" />
              <Prop h="h-[30px]" deep guide tri="closed" name="style" count="{1}" extra={swatch} />
              <Prop h="h-[32px]" deep guide name="delay" v="500" c="o" />
              <Prop h="h-[24px]" deep guide name="sustain" v="10,000" c="o" />
              <Prop h="h-[30px]" deep guide name="location" v="mouse" c="g" extra={drop} />
              <Prop h="h-[26px]" deep guide name="tail" v="true" c="b" extra={ticked} />
              <Prop h="h-[28px]" tri="open" name="contextMenu" count="{3}" />
              <Prop h="h-[28px]" deep guide name="enabled" v="false" c="b" extra={blank} />
              <Prop h="h-[26px]" deep guide tri="closed" name="items" count="[0]" />
              <Prop h="h-[38px]" deep guide tri="closed" name="style" count="{1}" extra={swatch} />
            </Body>
          </div>
          <div className="flex flex-1 flex-col border-l border-[#c0c5c9]">
            <div className="flex h-[15px] items-center justify-center bg-white"><Svg w={9} h={7}><path d="M1 5.500l3.500-3.500L8 5.500" stroke={INK} strokeWidth="1.500" /></Svg></div>
            <div className="flex h-[705px] items-center justify-center bg-[#bfc4c8]"><VGrip c="bg-white" n={9} /></div>
            <div className="flex flex-1 items-end justify-center bg-white pb-[5px]"><Svg w={9} h={7}><path d="M1 1.500L4.500 5 8 1.500" stroke={INK} strokeWidth="1.500" /></Svg></div>
          </div>
        </div>
      </div>
    </div>
  );
}

/* ---------- bottom bars ---------- */
const Logo = () => (
  <Svg w={18} h={26} vb="-5 0 18 26">
    <circle cx="0" cy="13" r="12.500" fill="#10257c" />
    <path d="M0 13L0 .5A12.500 12.500 0 0 1 11 7z" fill="#1b7f83" /><path d="M0 13L10 5.500A12.500 12.500 0 0 1 12.500 12z" fill="#12a36d" />
    <path d="M0 14l12.500 0A12.500 12.500 0 0 1 4 25z" fill="#3f9cf0" />
    <path d="M-5 5L0 14 1 25-5 24z" fill="#f04a32" /><path d="M-5 7L-1 13-3 17-5 15z" fill="#f8a13c" />
    <path d="M-4 11l3 5 7-12" stroke="#fff" strokeWidth="2.200" />
  </Svg>
);
const External = () => (
  <Svg w={17} h={17}>
    <path d="M7 1.500H1.500v14h14V10" stroke="#0b0b60" strokeWidth="2" /><path d="M9.500 1.500h6v6M15.500 1.500L6 11" stroke="#0b0b60" strokeWidth="1.900" />
  </Svg>
);

export default function App() {
  return (
    <div className="flex h-[1017px] w-[1908px] flex-col overflow-hidden bg-[#fafafa] font-['Noto_Sans',sans-serif] text-[#333]">
      <div className="flex h-[29px] shrink-0 items-center justify-between bg-gradient-to-r from-[#f5f5f7] via-[#eef1f9] to-[#f4f4f4]">
        <div className="flex items-center">
          <Svg w={10} h={16}>
            <rect x="-6" width="15.500" height="16" rx="2" fill="#1b2f86" /><path d="M3 0h6v8H5z" fill="#1aa487" /><path d="M4 16l5-7v7z" fill="#3f9cf0" />
            <path d="M0 2l3 8-1 6H0z" fill="#ef4a36" /><path d="M0 8l2 3 5-8" stroke="#fff" strokeWidth="1.800" />
          </Svg>
          <span className="ml-[7px] text-[15px] leading-none tracking-[-0.367px] whitespace-nowrap text-black">
            Environment_Monitoring - Ignition-LAPTOP-VH9B4B9N - Ignition Designer - Maker Edition (non-commercial use only)
          </span>
        </div>
        <div className="flex items-center gap-[46px] pr-[23px]">
          <Svg w={13} h={12}><path d="M0 6.500h12" stroke="#111" /></Svg>
          <Svg w={12} h={12}><rect x="1" y="3" width="8" height="8" rx="1.500" stroke="#111" strokeWidth="1.200" /><path d="M3.500 1h5.500a2 2 0 0 1 2 2v5.500" stroke="#111" strokeWidth="1.200" /></Svg>
          <Svg w={13} h={13}><path d="M.5.5l12 12M12.500.5l-12 12" stroke="#111" strokeWidth="1.200" /></Svg>
        </div>
      </div>
      <div className="flex h-[33px] shrink-0 items-center bg-[#d9dde0] pl-[4px] text-[15px] text-[#333]">
        {[["F", "ile", "w-[51px]"], ["E", "dit", "w-[53px]"], ["V", "iew", "w-[62px]"], ["P", "roject", "w-[76px]"], ["", "Component", "w-[109px]"], ["T", "ools", "w-[66px]"], ["H", "elp", "w-[60px]"]].map(([a, b, w]) => (
          <div key={b} className={w}><span className="underline underline-offset-2">{a}</span>{b}</div>
        ))}
      </div>
      <Toolbar />
      <div className="flex h-[849px] shrink-0">
        <LeftDock />
        <div className="flex w-[9px] shrink-0 items-center justify-center pl-px"><VGrip /></div>
        <Workspace />
        <div className="flex w-[8px] shrink-0 items-center justify-center"><VGrip /></div>
        <PropertyEditor />
        <div className="flex flex-1 flex-col items-end pt-[2px]">
          <div className="flex h-[238px] w-[30px] flex-col items-center border border-r-0 border-[#a2a2a2] pt-[5px] pr-[2px]">
            <Svg w={16} h={16}>
              <path d="M8 .5C3.500.5.500 3.500.500 8s3 6.500 5 7.500c2 .5 1.500-1.500 1-2.500-.5-1.500.5-2.500 2-2.500h4c2 0 3-1 3-3C15.500 3 12 .5 8 .5z" fill={INK} transform="matrix(-1 0 0 1 16 0)" />
              <circle cx="5" cy="4.500" r="1.300" fill="#fff" /><circle cx="9.500" cy="3.500" r="1.300" fill="#fff" /><circle cx="13" cy="7" r="1.300" fill="#fff" /><circle cx="12.500" cy="11" r="1.200" fill="#fff" />
            </Svg>
            <span className="mt-[10px] text-[15.300px] leading-[18px] font-bold whitespace-nowrap text-[#6f7477] [writing-mode:vertical-rl]">Perspective Components</span>
          </div>
        </div>
      </div>
      <div className="grid h-[34px] shrink-0 grid-cols-3 items-center border-y border-[#b5b9bd] bg-gradient-to-r from-white via-[#e9f5ff] via-40% to-[#66bdff]">
        <div className="flex items-center"><Logo /><span className="ml-[6px] text-[18.600px] leading-none tracking-[-0.340px] text-[#0a0a6e]">Ignition Maker Edition</span></div>
        <div className="pr-[10px] text-center text-[15px] leading-none font-bold text-[#0a0a55]">NON-COMMERCIAL USE ONLY</div>
        <div className="flex items-center justify-end pr-[11px] text-[15px] leading-none text-[#0a0a8a]">
          Forum<span className="mr-[20px] ml-[4px]"><External /></span>Docs<span className="ml-[4px]"><External /></span>
        </div>
      </div>
      <div className="flex min-h-0 flex-1 items-center text-[15px] leading-none">
        <Svg w={17} h={19} className="mt-[4px]"><path d="M0 0h6v8H0zM9 0h7v8H9zM0 11h6v8H0zM9 11h7v8H9z" fill="#707070" /></Svg>
        <span className="mt-[4px] ml-[35px] text-[14.800px] text-black">No changes to save.</span>
        <div className="flex-1" />
        <div className="flex h-[33px] w-[43px] items-center justify-center border-l border-[#b9b9b9] pt-[4px] text-[15.300px]">90%</div>
        <div className="flex h-[33px] w-[117px] items-center justify-center border-x border-[#b9b9b9] pt-[4px] text-[15.500px]">326 / 1024 mb</div>
        <div className="flex w-[30px] items-center justify-center pt-[1px]">
          <Svg w={18} h={18}>
            <path d="M1 3h9v3.500H1zM1 8.500h15V12H1zM1 14h15v3.500H1z" fill={INK} /><path d="M3 4.700h4M3 10.200h7M3 15.700h7" stroke="#fff" strokeWidth=".9" />
            <path d="M8.500 4l3 3L17.500 1" stroke="#21a366" strokeWidth="2.600" />
          </Svg>
        </div>
      </div>
    </div>
  );
}
